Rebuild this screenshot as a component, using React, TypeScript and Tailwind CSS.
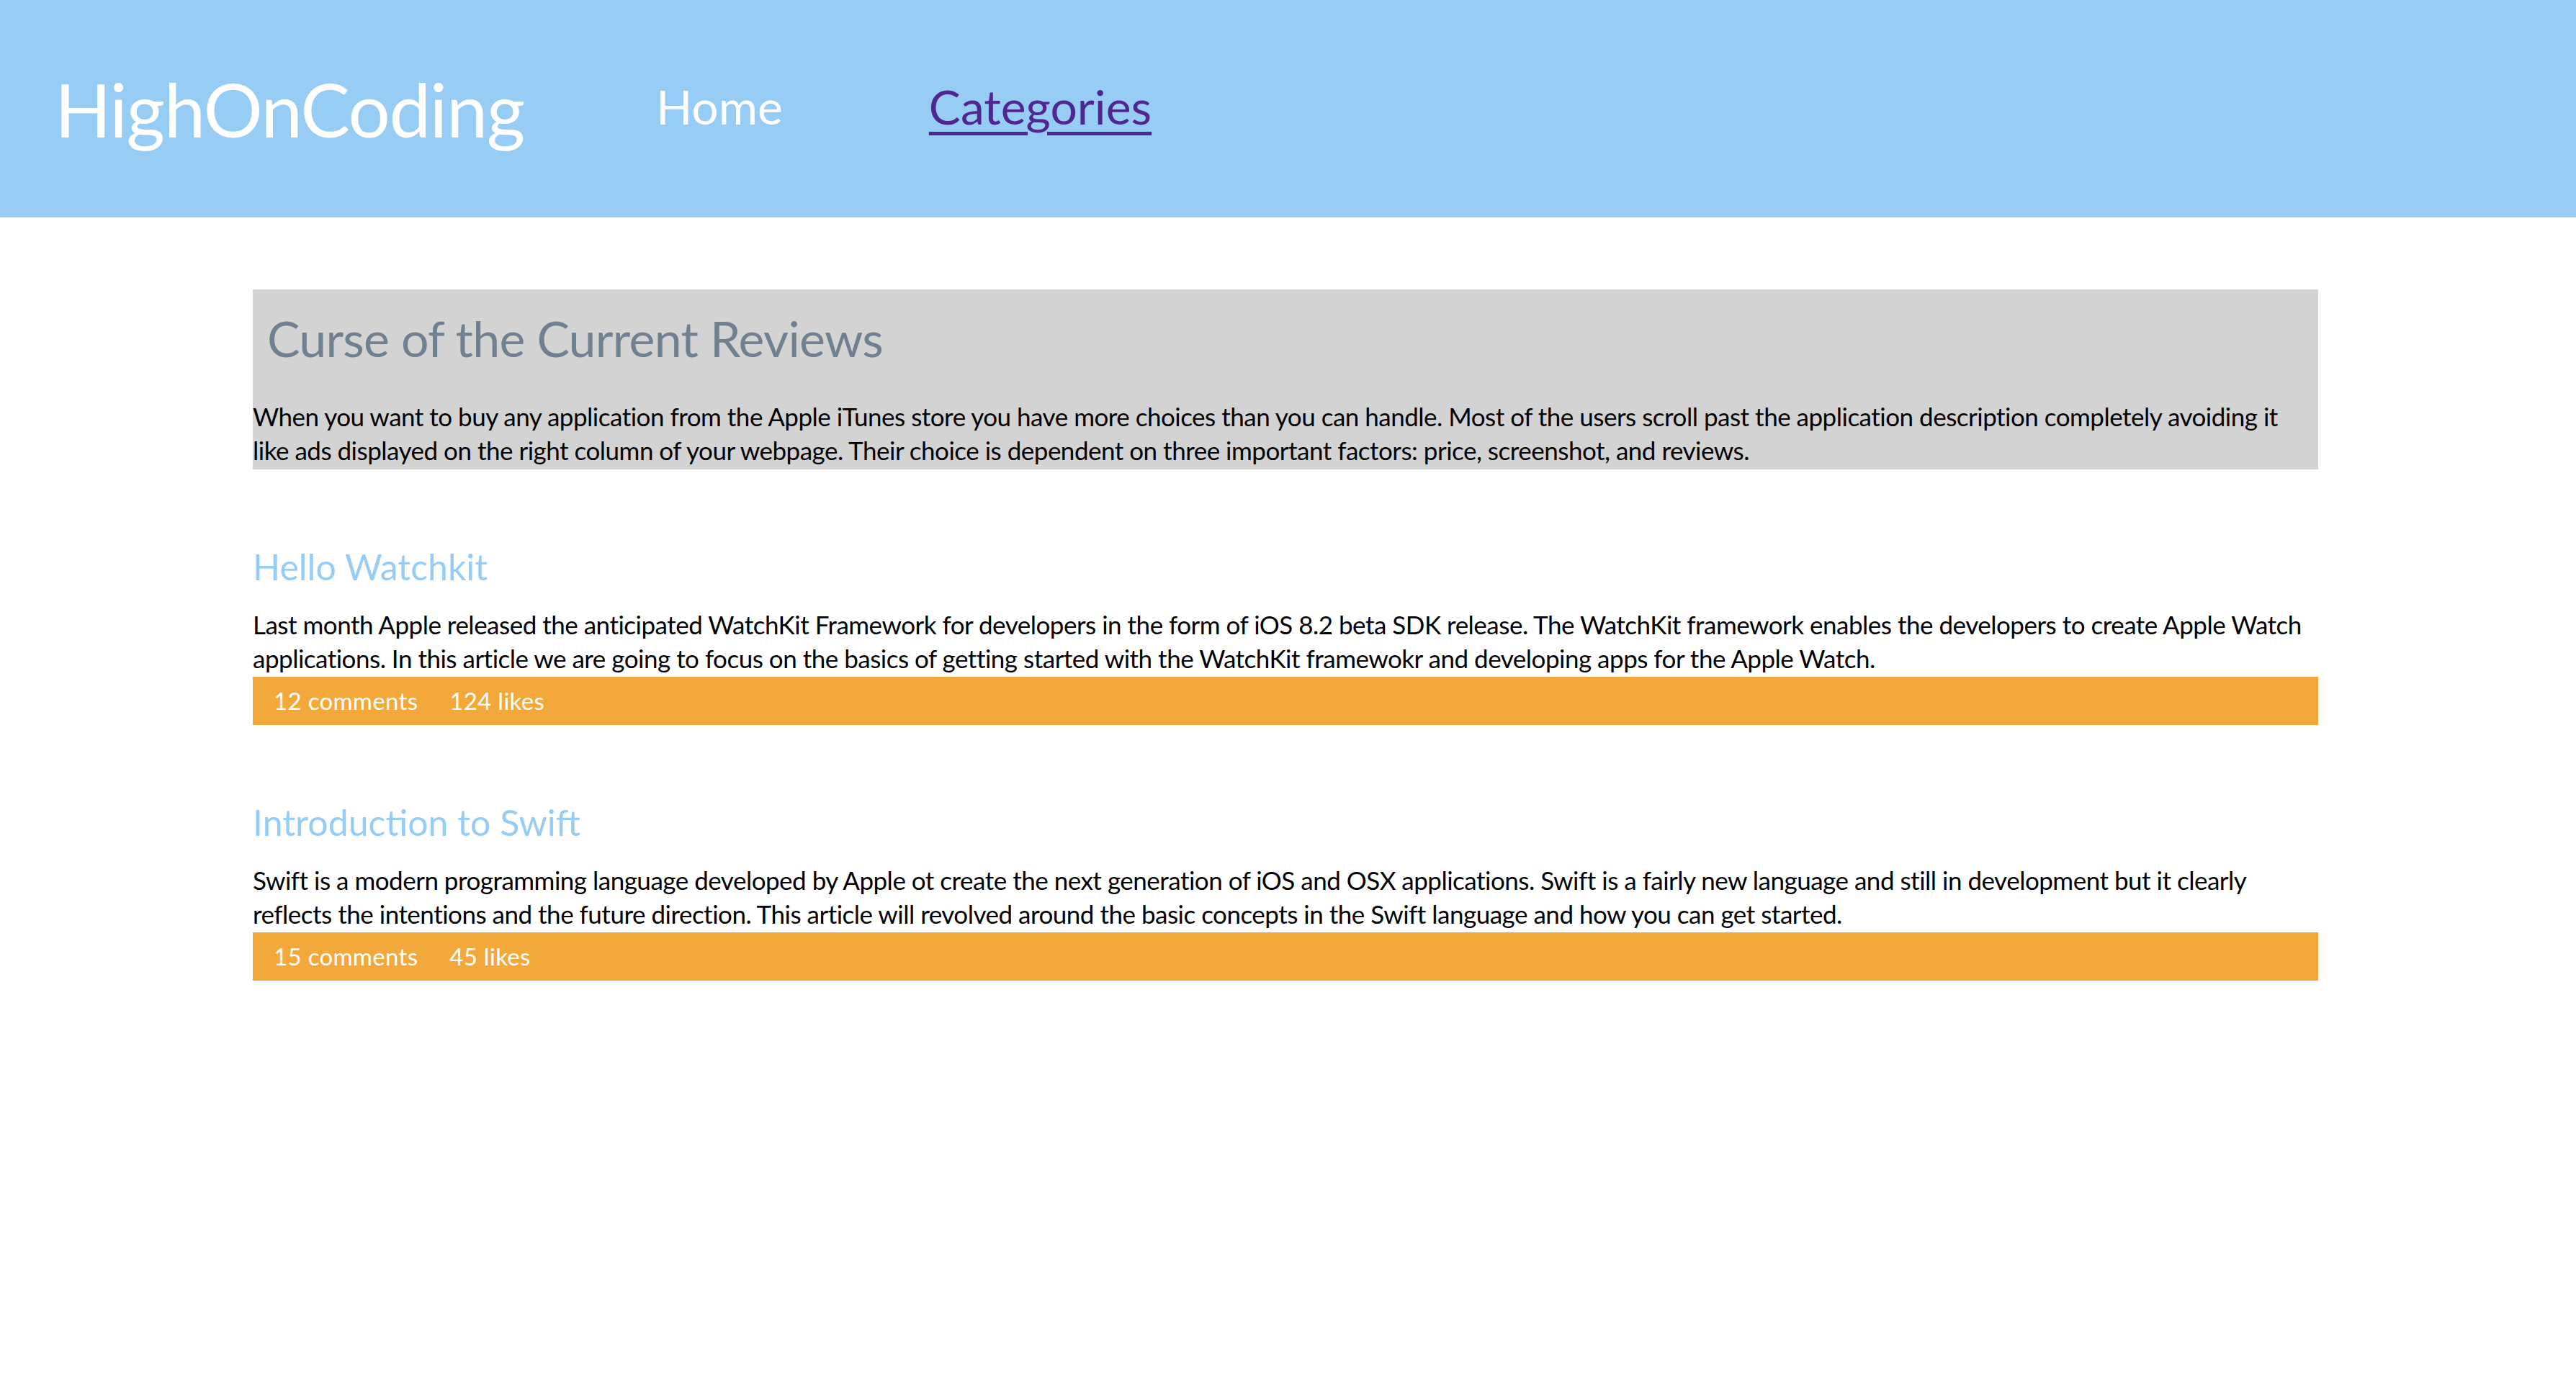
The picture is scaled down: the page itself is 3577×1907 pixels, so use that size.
const articles = [
  {
    title: 'Hello Watchkit',
    body: 'Last month Apple released the anticipated WatchKit Framework for developers in the form of iOS 8.2 beta SDK release. The WatchKit framework enables the developers to create Apple Watch applications. In this article we are going to focus on the basics of getting started with the WatchKit framewokr and developing apps for the Apple Watch.',
    comments: 12,
    likes: 124,
  },
  {
    title: 'Introduction to Swift',
    body: 'Swift is a modern programming language developed by Apple ot create the next generation of iOS and OSX applications. Swift is a fairly new language and still in development but it clearly reflects the intentions and the future direction. This article will revolved around the basic concepts in the Swift language and how you can get started.',
    comments: 15,
    likes: 45,
  },
];

export default function App() {
  return (
    <div className="min-h-screen bg-white font-['Lato','Liberation_Sans',sans-serif] text-black">
      <header className="flex h-[302px] items-center bg-[#97cdf5] pl-[76px]">
        <h1 className="text-[103px] leading-[131px] tracking-[-1.5px] text-white">HighOnCoding</h1>
        <nav className="mb-[6px] ml-[183px] flex items-center gap-[203px] text-[66px] leading-[82px]">
          <a href="#" className="text-white">Home</a>
          <a href="#" className="text-[#50268f] underline decoration-[5px] underline-offset-[10px]">
            Categories
          </a>
        </nav>
      </header>

      <main className="ml-[351px] w-[2868px] pt-[100px]">
        <section className="bg-[#d3d3d3] pb-[3px] pt-[25px]">
          <h2 className="pl-[20px] text-[68px] leading-[86px] tracking-[-0.7px] text-[#708090]">
            Curse of the Current Reviews
          </h2>
          <p className="mt-[42px] text-[35px] leading-[47px] tracking-[-0.5px]">
            When you want to buy any application from the Apple iTunes store you have more choices than you can handle. Most of the users scroll past the application description completely avoiding it like ads displayed on the right column of your webpage. Their choice is dependent on three important factors: price, screenshot, and reviews.
          </p>
        </section>

        {articles.map((a) => (
          <article key={a.title} className="mt-[104px]">
            <h3 className="text-[50px] leading-[62px] text-[#97cdf5]">{a.title}</h3>
            <p className="mt-[26px] text-[35px] leading-[47px] tracking-[-0.5px]">{a.body}</p>
            <div className="mt-[2px] flex h-[67px] items-center gap-[44px] bg-[#f2a83b] pl-[29px] text-[33px] tracking-[0.3px] text-white">
              <span>{a.comments} comments</span>
              <span>{a.likes} likes</span>
            </div>
          </article>
        ))}
      </main>
    </div>
  );
}
